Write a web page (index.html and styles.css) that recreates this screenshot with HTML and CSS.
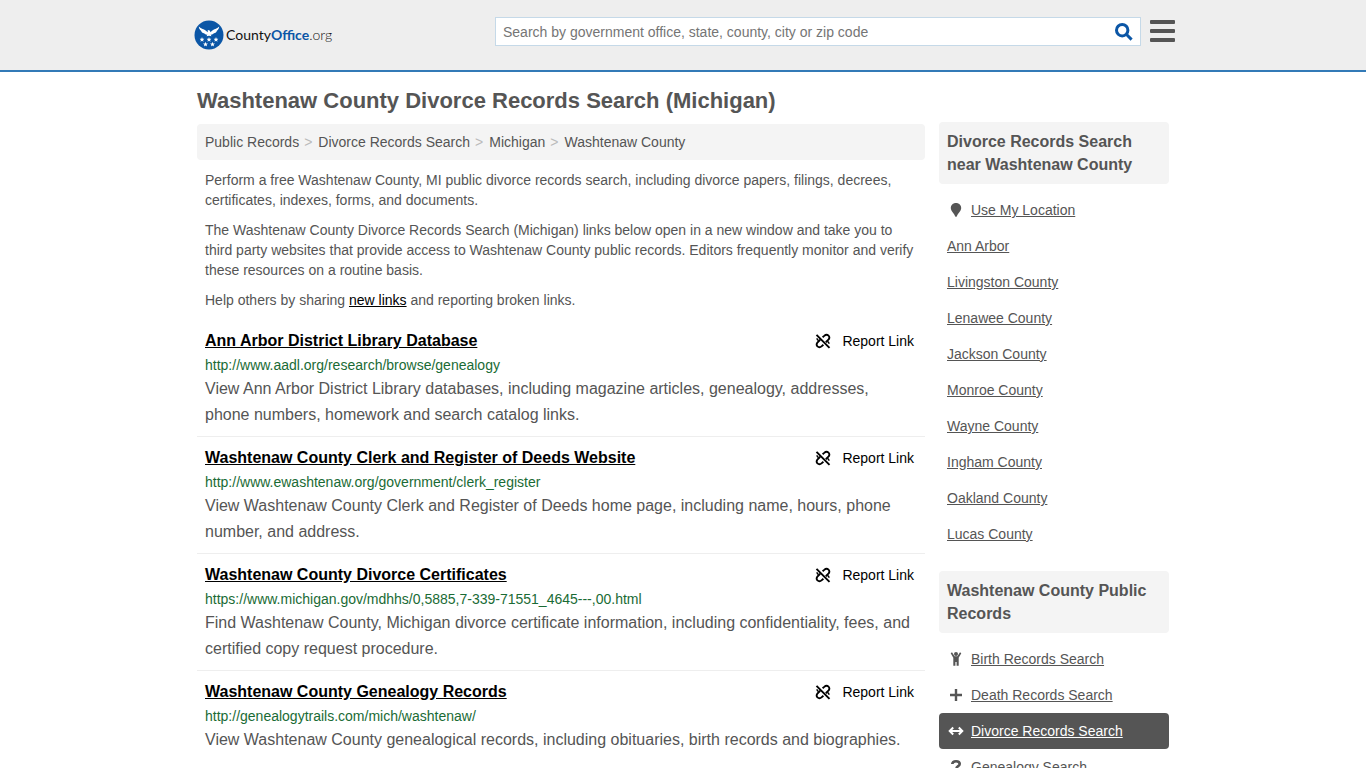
FILE: index.html
```html
<!DOCTYPE html>
<html lang="en">
<head>
  <meta charset="UTF-8">
  <meta name="viewport" content="width=device-width, initial-scale=1.0">
  <title>Washtenaw County Divorce Records Search (Michigan)</title>
  <link rel="stylesheet" href="styles.css">
</head>
<body>

<!-- Shared icons -->
<svg class="sprite" aria-hidden="true">
  <symbol id="icon-unlink" viewBox="0 0 16 16">
    <g fill="none" stroke="currentColor" stroke-width="1.900">
      <path d="M7.600 4.300L9.200 2.900C10.500 1.700 12.300 1.500 13.500 2.600C14.700 3.700 14.600 5.500 13.400 6.700L10.800 9.200"/>
      <path d="M8.400 11.700L6.800 13.100C5.500 14.300 3.700 14.500 2.500 13.400C1.300 12.300 1.400 10.500 2.600 9.300L5.200 6.800"/>
      <path d="M1.500 1.800L14.500 14.800"/>
      <path d="M2 5.200C2 6.300 2.600 7 3.600 7.600M14 10.800C14 9.700 13.400 9 12.400 8.400" stroke-width="1.500"/>
    </g>
  </symbol>
  <symbol id="star" viewBox="0 0 10 10">
    <path d="M5 0L6.300 3.400L10 3.700L7.100 6L8.100 9.700L5 7.600L1.900 9.700L2.900 6L0 3.700L3.700 3.400Z"/>
  </symbol>
</svg>

<header class="site-header">
  <div class="header-inner">
    <a class="logo" href="#" aria-label="CountyOffice.org">
      <svg class="logo-mark" viewBox="0 0 30 30" aria-hidden="true">
        <circle cx="15" cy="15" r="14.500" fill="#0b56a6"/>
        <g fill="#fff">
          <path d="M4.800 6.500C6.500 8.300 9.500 9 12 10.800L13.600 12.200L14 11.400L13.200 11L14.500 10.100L16 10.700L16.400 12.200L18 10.800C20.500 9 23.500 8.300 25.200 6.500C25 8.500 24.200 10 22.900 10.800C22.600 12.200 21.400 13.100 20 13.300C19 14.500 17.600 14.800 16.700 14.600L17.400 16.300L15 15.700L12.600 16.300L13.300 14.600C12.400 14.800 11 14.500 10 13.300C8.600 13.100 7.400 12.200 7.100 10.800C5.800 10 5 8.500 4.800 6.500Z"/>
          <use href="#star" x="5.500" y="17" width="5" height="5"/>
          <use href="#star" x="12.500" y="17" width="5" height="5"/>
          <use href="#star" x="19.500" y="17" width="5" height="5"/>
          <use href="#star" x="9" y="21.700" width="5" height="5"/>
          <use href="#star" x="16" y="21.700" width="5" height="5"/>
        </g>
      </svg>
      <span class="logo-text">County<b>Office</b><span class="logo-tld">.org</span></span>
    </a>

    <form class="search">
      <input type="text" name="q" aria-label="Search" placeholder="Search by government office, state, county, city or zip code">
      <button type="submit" aria-label="Submit search">
        <svg viewBox="0 0 18 18" aria-hidden="true">
          <g fill="none" stroke="#0b56a6" stroke-width="3">
            <circle cx="7.200" cy="7.200" r="5.700"/>
            <path d="M11.300 11.300L16.600 16.600"/>
          </g>
        </svg>
      </button>
    </form>

    <button class="menu-btn" type="button" aria-label="Menu">
      <span></span><span></span><span></span>
    </button>
  </div>
</header>

<div class="container">
  <main class="content">
    <h1>Washtenaw County Divorce Records Search (Michigan)</h1>

    <nav aria-label="Breadcrumb">
      <ol class="breadcrumb">
        <li><a href="#">Public Records</a></li>
        <li><a href="#">Divorce Records Search</a></li>
        <li><a href="#">Michigan</a></li>
        <li><a href="#">Washtenaw County</a></li>
      </ol>
    </nav>

    <div class="intro">
      <p>Perform a free Washtenaw County, MI public divorce records search, including divorce papers, filings, decrees, certificates, indexes, forms, and documents.</p>
      <p>The Washtenaw County Divorce Records Search (Michigan) links below open in a new window and take you to third party websites that provide access to Washtenaw County public records. Editors frequently monitor and verify these resources on a routine basis.</p>
      <p>Help others by sharing <a href="#">new links</a> and reporting broken links.</p>
    </div>

    <article class="result">
      <div class="result-head">
        <h2><a href="#">Ann Arbor District Library Database</a></h2>
        <a class="report" href="#"><svg aria-hidden="true"><use href="#icon-unlink"/></svg>Report Link</a>
      </div>
      <div class="result-url">http://www.aadl.org/research/browse/genealogy</div>
      <p>View Ann Arbor District Library databases, including magazine articles, genealogy, addresses, phone numbers, homework and search catalog links.</p>
    </article>

    <article class="result">
      <div class="result-head">
        <h2><a href="#">Washtenaw County Clerk and Register of Deeds Website</a></h2>
        <a class="report" href="#"><svg aria-hidden="true"><use href="#icon-unlink"/></svg>Report Link</a>
      </div>
      <div class="result-url">http://www.ewashtenaw.org/government/clerk_register</div>
      <p>View Washtenaw County Clerk and Register of Deeds home page, including name, hours, phone number, and address.</p>
    </article>

    <article class="result">
      <div class="result-head">
        <h2><a href="#">Washtenaw County Divorce Certificates</a></h2>
        <a class="report" href="#"><svg aria-hidden="true"><use href="#icon-unlink"/></svg>Report Link</a>
      </div>
      <div class="result-url">https://www.michigan.gov/mdhhs/0,5885,7-339-71551_4645---,00.html</div>
      <p>Find Washtenaw County, Michigan divorce certificate information, including confidentiality, fees, and certified copy request procedure.</p>
    </article>

    <article class="result">
      <div class="result-head">
        <h2><a href="#">Washtenaw County Genealogy Records</a></h2>
        <a class="report" href="#"><svg aria-hidden="true"><use href="#icon-unlink"/></svg>Report Link</a>
      </div>
      <div class="result-url">http://genealogytrails.com/mich/washtenaw/</div>
      <p>View Washtenaw County genealogical records, including obituaries, birth records and biographies.</p>
    </article>
  </main>

  <aside class="sidebar">
    <h2>Divorce Records Search near Washtenaw County</h2>
    <ul>
      <li>
        <a href="#">
          <svg viewBox="0 0 18 16" aria-hidden="true"><path d="M9 1C5.900 1 3.800 3.200 3.800 6C3.800 9 7.200 11.500 8.300 14.600Q9 15.400 9.700 14.600C10.800 11.500 14.200 9 14.200 6C14.200 3.200 12.100 1 9 1Z"/></svg>
          <span>Use My Location</span>
        </a>
      </li>
      <li><a href="#"><span>Ann Arbor</span></a></li>
      <li><a href="#"><span>Livingston County</span></a></li>
      <li><a href="#"><span>Lenawee County</span></a></li>
      <li><a href="#"><span>Jackson County</span></a></li>
      <li><a href="#"><span>Monroe County</span></a></li>
      <li><a href="#"><span>Wayne County</span></a></li>
      <li><a href="#"><span>Ingham County</span></a></li>
      <li><a href="#"><span>Oakland County</span></a></li>
      <li><a href="#"><span>Lucas County</span></a></li>
    </ul>

    <h2>Washtenaw County Public Records</h2>
    <ul>
      <li>
        <a href="#">
          <svg viewBox="0 0 18 16" aria-hidden="true">
            <circle cx="9" cy="3" r="2"/>
            <path d="M3.700 2.300L5 1.200L7.600 5.200H10.400L13 1.200L14.300 2.300L11.700 6.800V14.700H9.600V11H8.400V14.700H6.300V6.800Z"/>
          </svg>
          <span>Birth Records Search</span>
        </a>
      </li>
      <li>
        <a href="#">
          <svg viewBox="0 0 18 16" aria-hidden="true"><path d="M7.800 2H10.200V6.800H15V9.200H10.200V14H7.800V9.200H3V6.800H7.800Z"/></svg>
          <span>Death Records Search</span>
        </a>
      </li>
      <li class="active">
        <a href="#">
          <svg viewBox="0 0 18 16" aria-hidden="true">
            <path d="M3 8H15M6.200 4.500L2.700 8L6.200 11.500M11.800 4.500L15.300 8L11.800 11.500" fill="none" stroke="currentColor" stroke-width="2"/>
          </svg>
          <span>Divorce Records Search</span>
        </a>
      </li>
      <li>
        <a href="#">
          <svg viewBox="0 0 18 16" aria-hidden="true">
            <path d="M5.300 5C5.500 2.900 7 2.200 9 2.200C11.300 2.200 12.700 3.200 12.700 5C12.700 7.400 9.300 7 9.300 10" fill="none" stroke="currentColor" stroke-width="2.600"/>
            <circle cx="9.300" cy="13.300" r="1.600"/>
          </svg>
          <span>Genealogy Search</span>
        </a>
      </li>
    </ul>
  </aside>
</div>

</body>
</html>
```
FILE: styles.css
```css
* {
  box-sizing: border-box;
}

body {
  margin: 0;
  font-family: Arial, "Liberation Sans", sans-serif;
  font-size: 14px;
  line-height: 20px;
  color: #555;
  background-color: #fff;
}

a {
  color: #555;
}

.sprite {
  display: none;
}

/* Header */
.site-header {
  height: 72px;
  background-color: #eee;
  border-bottom: 2px solid #337ab7;
}

.header-inner {
  display: flex;
  align-items: flex-start;
  max-width: 984px;
  margin: 0 auto;
  padding: 17px 0 0 3px;
}

.logo {
  display: flex;
  align-items: center;
  flex: 0 0 301px;
  height: 36px;
  gap: 2px;
  color: #111;
  text-decoration: none;
}

.logo-mark {
  width: 30px;
  height: 30px;
}

.logo-text {
  font-family: Lato, sans-serif;
  font-size: 14px;
}

.logo-text b {
  color: #0b56a6;
}

.logo-tld {
  font-weight: 300;
}

.search {
  display: flex;
  flex: 1;
  height: 29px;
  background-color: #fff;
  border: 1px solid #c5d9e8;
}

.search input {
  flex: 1;
  min-width: 0;
  padding: 0 7px;
  border: none;
  outline: none;
  background: none;
  font-family: inherit;
  font-size: 14px;
  color: #555;
}

.search input::placeholder {
  color: #757575;
}

.search button {
  display: flex;
  align-items: center;
  padding: 0 7px;
  border: none;
  background: none;
  cursor: pointer;
}

.search button svg {
  width: 18px;
  height: 18px;
}

.menu-btn {
  display: flex;
  flex-direction: column;
  gap: 5px;
  width: 25px;
  margin-left: 9px;
  padding: 3px 0;
  border: none;
  background: none;
  cursor: pointer;
}

.menu-btn span {
  width: 100%;
  height: 4px;
  border-radius: 1px;
  background-color: #555;
}

/* Layout */
.container {
  display: flex;
  align-items: flex-start;
  gap: 14px;
  max-width: 972px;
  margin: 0 auto;
}

.content {
  flex: 1;
  min-width: 0;
}

h1 {
  margin: 17px 0 11px;
  font-size: 22px;
  line-height: 24px;
}

.breadcrumb {
  display: flex;
  margin: 0 0 10px;
  padding: 8px;
  list-style: none;
  background-color: #f4f4f4;
  border-radius: 4px;
}

.breadcrumb a {
  text-decoration: none;
}

.breadcrumb li + li::before {
  content: ">";
  padding: 0 6px 0 5px;
  color: #bbb;
}

.intro {
  padding: 0 8px;
}

.intro p {
  margin: 0 0 10px;
}

.intro a {
  color: #000;
}

/* Results */
.result {
  padding: 8px;
}

.result + .result {
  border-top: 1px solid #eee;
}

.result-head {
  display: flex;
  justify-content: space-between;
  padding-right: 3px;
  line-height: 26px;
}

.result h2 {
  margin: 0;
  font-size: 16px;
}

.result-head a {
  color: #000;
}

.report {
  display: flex;
  align-items: center;
  gap: 11px;
  text-decoration: none;
}

.report svg {
  width: 16px;
  height: 16px;
}

.result-url {
  line-height: 22px;
  color: #1a6b35;
}

.result p {
  margin: 0;
  font-size: 16px;
  line-height: 26px;
}

/* Sidebar */
.sidebar {
  flex: 0 0 230px;
  padding-top: 50px;
}

.sidebar h2 {
  margin: 0 0 8px;
  padding: 8px;
  font-size: 16px;
  line-height: 23px;
  background-color: #f4f4f4;
  border-radius: 4px;
}

.sidebar ul {
  margin: 0 0 19px;
  padding: 0;
  list-style: none;
}

.sidebar li a {
  display: flex;
  align-items: center;
  gap: 6px;
  padding: 8px;
  text-decoration: none;
}

.sidebar li span {
  text-decoration: underline;
}

.sidebar svg {
  width: 18px;
  height: 16px;
  fill: currentColor;
}

.sidebar .active a {
  color: #fff;
  background-color: #555;
  border-radius: 4px;
}
```
